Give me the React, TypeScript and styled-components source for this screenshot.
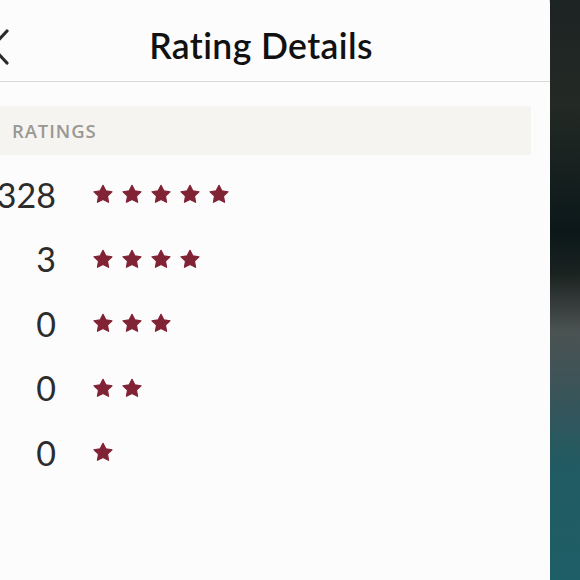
import styled, { createGlobalStyle } from "styled-components";

const GlobalStyle = createGlobalStyle`
  html, body {
    margin: 0;
    padding: 0;
    width: 580px;
    height: 580px;
    overflow: hidden;
  }
  body {
    font-family: "Lato", "Noto Sans", sans-serif;
  }
`;

// 오른쪽 어두운 배경 (폰 바깥)
const Backdrop = styled.div`
  width: 580px;
  height: 580px;
  overflow: hidden;
  display: flex;
  background: linear-gradient(
    180deg,
    #1c2323 0%,
    #232a25 18%,
    #0b1719 40%,
    #1a2220 47%,
    #4b5252 57%,
    #3d5458 66%,
    #215a62 80%,
    #1e5e66 100%
  );
`;

const Panel = styled.div`
  flex: 0 0 578px;
  margin-left: -28px;
  margin-top: -30px;
  height: 610px;
  background: #fcfcfc;
  border-top-right-radius: 34px;
  display: flex;
  flex-direction: column;
`;

const Header = styled.header`
  height: 112px;
  box-sizing: border-box;
  padding-top: 42px;
  display: grid;
  grid-template-columns: 1fr auto 1fr;
  align-items: center;
  border-bottom: 1px solid #d8d8d8;
`;

const BackButton = styled.button`
  justify-self: start;
  margin-left: 18px;
  padding: 0;
  border: 0;
  background: none;
  display: flex;
  align-items: center;
  color: #2b2b2b;
`;

const Title = styled.h1`
  margin: 0;
  font-family: "Lato", "Noto Sans", sans-serif;
  font-weight: 600;
  font-size: 35.5px;
  letter-spacing: 0.4px;
  color: #111;
  line-height: 1;
  padding-bottom: 2px;
`;

const Body = styled.div`
  padding: 24px 19px 0;
  display: flex;
  flex-direction: column;
`;

const SectionBar = styled.div`
  height: 49px;
  background: #f5f4f1;
  display: flex;
  align-items: center;
  padding-left: 21px;
`;

const SectionLabel = styled.span`
  font-family: "Open Sans", "Lato", sans-serif;
  font-weight: 600;
  font-size: 18.5px;
  letter-spacing: 0.9px;
  color: #9a9893;
`;

const List = styled.div`
  margin-top: 7px;
  display: flex;
  flex-direction: column;
`;

const Row = styled.div`
  height: 64.5px;
  display: flex;
  align-items: center;
  gap: 37px;
`;

const Count = styled.span`
  width: 65px;
  text-align: right;
  font-family: "Lato", sans-serif;
  font-weight: 400;
  font-size: 34px;
  color: #2c2c2c;
`;

const Stars = styled.div`
  display: flex;
  gap: 9px;
  color: #802335;
`;

const Star = () => (
  <svg width="20" height="20" viewBox="0 0 24 24">
    <polygon
      points="12,1.5 15.4,8.2 22.8,9.3 17.4,14.5 18.7,22 12,18.5 5.3,22 6.6,14.5 1.2,9.3 8.6,8.2"
      fill="currentColor"
      stroke="currentColor"
      strokeWidth="1.4"
      strokeLinejoin="round"
    />
  </svg>
);

const rows = [
  { stars: 5, count: 328 },
  { stars: 4, count: 3 },
  { stars: 3, count: 0 },
  { stars: 2, count: 0 },
  { stars: 1, count: 0 },
];

const App = () => (
  <>
    <GlobalStyle />
    <Backdrop>
      <Panel>
        <Header>
          <BackButton aria-label="Back">
            <svg width="20" height="38" viewBox="0 0 20 38">
              <polyline
                points="17,3 2,19 17,35"
                fill="none"
                stroke="currentColor"
                strokeWidth="3.2"
                strokeLinecap="round"
                strokeLinejoin="round"
              />
            </svg>
          </BackButton>
          <Title>Rating Details</Title>
          <span />
        </Header>
        <Body>
          <SectionBar>
            <SectionLabel>RATINGS</SectionLabel>
          </SectionBar>
          <List>
            {rows.map((r) => (
              <Row key={r.stars}>
                <Count>{r.count}</Count>
                <Stars>
                  {Array.from({ length: r.stars }).map((_, i) => (
                    <Star key={i} />
                  ))}
                </Stars>
              </Row>
            ))}
          </List>
        </Body>
      </Panel>
    </Backdrop>
  </>
);

export default App;
